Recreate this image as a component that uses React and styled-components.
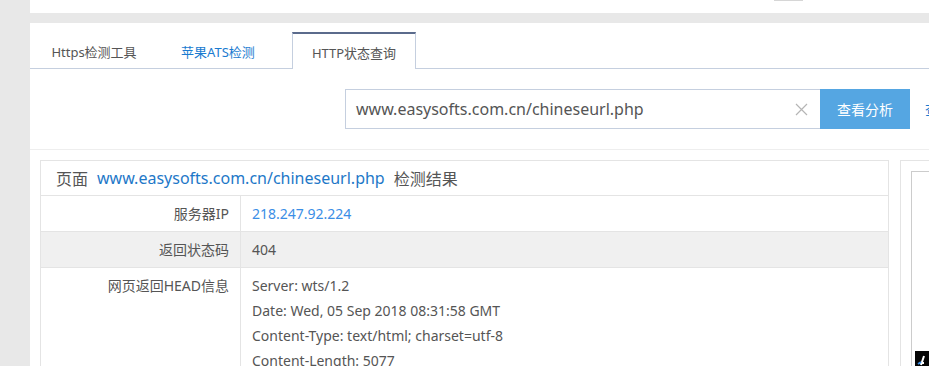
import React from "react"
import styled, { createGlobalStyle } from "styled-components"

const GlobalStyle = createGlobalStyle`
  html, body {
    margin: 0;
    padding: 0;
    background: #fff;
    overflow: hidden;
  }
  body {
    font-family: "Noto Sans", "Noto Sans CJK SC", sans-serif;
    color: #555;
  }
`

const Page = styled.div`
  display: flex;
  width: 929px;
  height: 366px;
  overflow: hidden;
`

const SideStrip = styled.div`
  flex: 0 0 30px;
  background: #e8e8e8;
`

const Main = styled.div`
  flex: 1;
  min-width: 0;
`

const TopStrip = styled.div`
  height: 13px;
  display: flex;
`

const TopThumb = styled.div`
  margin-left: 744px;
  width: 29px;
  height: 1px;
  background: #d6d6d6;
`

const GrayBand = styled.div`
  height: 10px;
  background: #e8e8e8;
`

const TabBar = styled.div`
  display: flex;
  align-items: flex-end;
  height: 46px;
  box-sizing: border-box;
  padding: 10px 0 0 2px;
  border-bottom: 1px solid #c5cfdf;
`

const Tab = styled.div`
  flex: 0 0 124px;
  box-sizing: border-box;
  margin-left: ${p => p.$space || 0}px;
  display: flex;
  align-items: center;
  justify-content: center;
  font-size: 13px;
  color: ${p => (p.$blue ? "#1a7bd0" : "#555")};
  background: #fff;
  border: 1px solid ${p => (p.$active ? "#c5cfdf" : "transparent")};
  border-top: 2px solid ${p => (p.$active ? "#5b6b8c" : "transparent")};
  border-bottom: none;
  margin-bottom: ${p => (p.$active ? "-1px" : "0")};
  height: ${p => (p.$active ? "37px" : "35px")};
  padding-top: ${p => (p.$active ? "1px" : "0")};
`

const SearchRow = styled.div`
  display: flex;
  align-items: center;
  padding: 20px 0 0 315px;
  white-space: nowrap;
`

const InputBox = styled.div`
  flex: 0 0 475px;
  height: 40px;
  box-sizing: border-box;
  border: 1px solid #c5cfdf;
  border-right: none;
  display: flex;
  align-items: center;
  padding: 0 12px 0 10px;
  font-size: 16px;
  color: #555;
`

const InputText = styled.span`
  flex: 1;
`

const Clear = styled.span`
  display: flex;
`

const SearchButton = styled.div`
  flex: 0 0 90px;
  height: 40px;
  background: #55a6e2;
  color: #fff;
  font-size: 14px;
  display: flex;
  align-items: center;
  justify-content: center;
`

const SideLink = styled.a`
  flex: 0 0 auto;
  margin-left: 15px;
  font-size: 14px;
  color: #1a7bd0;
`

const Divider = styled.div`
  margin-top: 20px;
  border-top: 1px solid #eeeeee;
`

const Content = styled.div`
  display: flex;
  gap: 11px;
  padding: 10px 0 0 10px;
`

const ResultBox = styled.div`
  flex: 0 0 849px;
  box-sizing: border-box;
  border: 1px solid #e4e4e4;
  border-bottom: none;
`

const ResultHeader = styled.div`
  height: 34px;
  display: flex;
  align-items: center;
  gap: 9px;
  padding-left: 15px;
  font-size: 16px;
  color: #555;
  border-bottom: 1px solid #e4e4e4;
`

const HeaderLink = styled.span`
  color: #1e78c8;
`

const Row = styled.div`
  display: grid;
  grid-template-columns: 200px 1fr;
  background: ${p => (p.$shade ? "#f0f0f0" : "#fff")};
  border-bottom: 1px solid #e4e4e4;
  min-height: ${p => p.$tall || 35}px;
  font-size: 14px;
`

const Label = styled.div`
  text-align: right;
  padding: ${p => (p.$top ? "5px 11px 0 0" : "0 11px 0 0")};
  line-height: ${p => (p.$top ? "25px" : "35px")};
  border-right: 1px solid #e4e4e4;
  color: #555;
`

const Value = styled.div`
  padding: ${p => (p.$top ? "5px 0 0 11px" : "0 0 0 11px")};
  line-height: ${p => (p.$top ? "25px" : "35px")};
  color: ${p => (p.$link ? "#3a8ee6" : "#555")};
`

const SidePanel = styled.div`
  flex: 0 0 120px;
  box-sizing: border-box;
  border: 1px solid #e4e4e4;
  padding: 10px 0 0 10px;
  height: 230px;
`

const InnerFrame = styled.div`
  border: 1px solid #cccccc;
  height: 230px;
  padding: 179px 0 0 3px;
  box-sizing: border-box;
`

const Thumb = styled.div`
  width: 60px;
  height: 30px;
  background: #050505;
  display: flex;
`

const headers = [
  "Server: wts/1.2",
  "Date: Wed, 05 Sep 2018 08:31:58 GMT",
  "Content-Type: text/html; charset=utf-8",
  "Content-Length: 5077",
]

export default function App() {
  return (
    <>
      <GlobalStyle />
      <Page>
        <SideStrip />
        <Main>
          <TopStrip>
            <TopThumb />
          </TopStrip>
          <GrayBand />
          <TabBar>
            <Tab>Https检测工具</Tab>
            <Tab $blue>苹果ATS检测</Tab>
            <Tab $active $space={12}>HTTP状态查询</Tab>
          </TabBar>
          <SearchRow>
            <InputBox>
              <InputText>www.easysofts.com.cn/chineseurl.php</InputText>
              <Clear>
                <svg width="13" height="13" viewBox="0 0 13 13">
                  <path d="M1 1L12 12M12 1L1 12" stroke="#b5b5b5" strokeWidth="1.2" />
                </svg>
              </Clear>
            </InputBox>
            <SearchButton>查看分析</SearchButton>
            <SideLink>查看示例</SideLink>
          </SearchRow>
          <Divider />
          <Content>
            <ResultBox>
              <ResultHeader>
                <span>页面</span>
                <HeaderLink>www.easysofts.com.cn/chineseurl.php</HeaderLink>
                <span>检测结果</span>
              </ResultHeader>
              <Row>
                <Label>服务器IP</Label>
                <Value $link>218.247.92.224</Value>
              </Row>
              <Row $shade>
                <Label>返回状态码</Label>
                <Value>404</Value>
              </Row>
              <Row $tall={180}>
                <Label $top>网页返回HEAD信息</Label>
                <Value $top>
                  {headers.map(h => (
                    <div key={h}>{h}</div>
                  ))}
                </Value>
              </Row>
            </ResultBox>
            <SidePanel>
              <InnerFrame>
                <Thumb>
                  <svg width="20" height="16" viewBox="0 0 20 16">
                    <path d="M4 12L9 12M9 5L6 14" stroke="#fff" strokeWidth="2" />
                    <path d="M3 13L6 11" stroke="#3a8ee6" strokeWidth="2" />
                  </svg>
                </Thumb>
              </InnerFrame>
            </SidePanel>
          </Content>
        </Main>
      </Page>
    </>
  )
}
